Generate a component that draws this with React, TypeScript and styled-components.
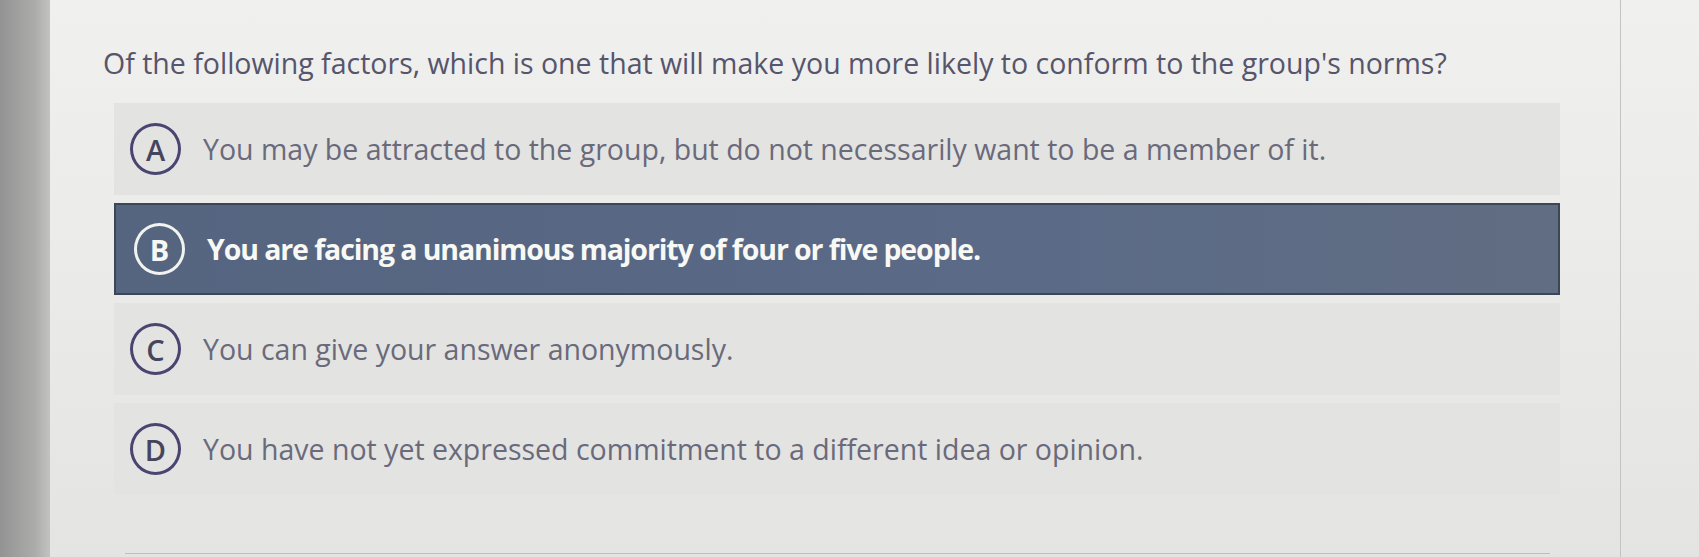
import React from "react";
import styled, { createGlobalStyle } from "styled-components";

const GlobalStyle = createGlobalStyle`
	html, body {
		margin: 0;
		padding: 0;
		width: 1699px;
		height: 557px;
		overflow: hidden;
		background: #e8e8e7;
	}
	* { box-sizing: border-box; }
`;

type Choice = { letter: string; text: string; selected?: boolean };

const choices: Choice[] = [
	{ letter: "A", text: "You may be attracted to the group, but do not necessarily want to be a member of it." },
	{ letter: "B", text: "You are facing a unanimous majority of four or five people.", selected: true },
	{ letter: "C", text: "You can give your answer anonymously." },
	{ letter: "D", text: "You have not yet expressed commitment to a different idea or opinion." },
];

const App = () => (
	<>
		<GlobalStyle />
		<Page>
			<Bezel />
			<Screen>
				<Main>
					<Question>Of the following factors, which is one that will make you more likely to conform to the group's norms?</Question>
					<Options>
						{choices.map(( choice ) => <Option key={choice.letter} {...choice} />)}
					</Options>
					<Rule />
				</Main>
				<Side />
			</Screen>
		</Page>
	</>
);

const Option = ( { letter, text, selected }: Choice ) => (
	<Row $selected={!!selected}>
		<Badge $selected={!!selected}>{letter}</Badge>
		<Label $selected={!!selected}>{text}</Label>
	</Row>
);

const Page = styled.div`
	display: flex;
	width: 1699px;
	height: 557px;
	font-family: "Open Sans", "Noto Sans", sans-serif;
`;
const Bezel = styled.div`
	width: 50px;
	flex-shrink: 0;
	background: linear-gradient(90deg, #939393 0%, #acacab 70%, #c2c2c1 100%);
`;
const Screen = styled.div`
	flex: 1;
	display: flex;
	background: linear-gradient(180deg, #f0f0ef 0%, #ebebea 45%, #e4e4e3 100%);
`;
const Main = styled.div`
	width: 1570px;
	display: flex;
	flex-direction: column;
	padding: 44px 0 0 53px;
`;
const Question = styled.div`
	font-size: 28.5px;
	line-height: 38px;
	color: #56556c;
	white-space: nowrap;
`;
const Options = styled.div`
	display: flex;
	flex-direction: column;
	gap: 8px;
	margin: 21px 0 0 11px;
	width: 1446px;
`;
const Row = styled.div<{ $selected: boolean }>`
	height: 92px;
	display: flex;
	align-items: center;
	gap: 22px;
	padding-left: ${p => p.$selected ? "18px" : "16px"};
	background: ${p => p.$selected ? "linear-gradient(90deg, #55647f 0%, #5a6a87 60%, #616d82 100%)" : "#e3e3e2"};
	border: ${p => p.$selected ? "2px solid #3d4656" : "none"};
`;
const Badge = styled.div<{ $selected: boolean }>`
	width: 51px;
	height: 52px;
	border-radius: 50%;
	flex-shrink: 0;
	display: flex;
	align-items: center;
	justify-content: center;
	border: 3px solid ${p => p.$selected ? "#f2f2f0" : "#4a4470"};
	color: ${p => p.$selected ? "#f7f7f5" : "#45455c"};
	font-size: 29px;
	font-weight: ${p => p.$selected ? 700 : 600};
`;
const Label = styled.div<{ $selected: boolean }>`
	font-size: 28.5px;
	color: ${p => p.$selected ? "#f8f8f4" : "#6a6a7b"};
	font-weight: ${p => p.$selected ? 700 : 400};
	letter-spacing: ${p => p.$selected ? "-1.1px" : "0"};
	white-space: nowrap;
`;
const Rule = styled.div`
	margin: 58px 0 0 22px;
	width: 1425px;
	height: 1px;
	background: #bdbdbc;
`;
const Side = styled.div`
	flex: 1;
	border-left: 1px solid #c3c3c2;
`;

export default App;
